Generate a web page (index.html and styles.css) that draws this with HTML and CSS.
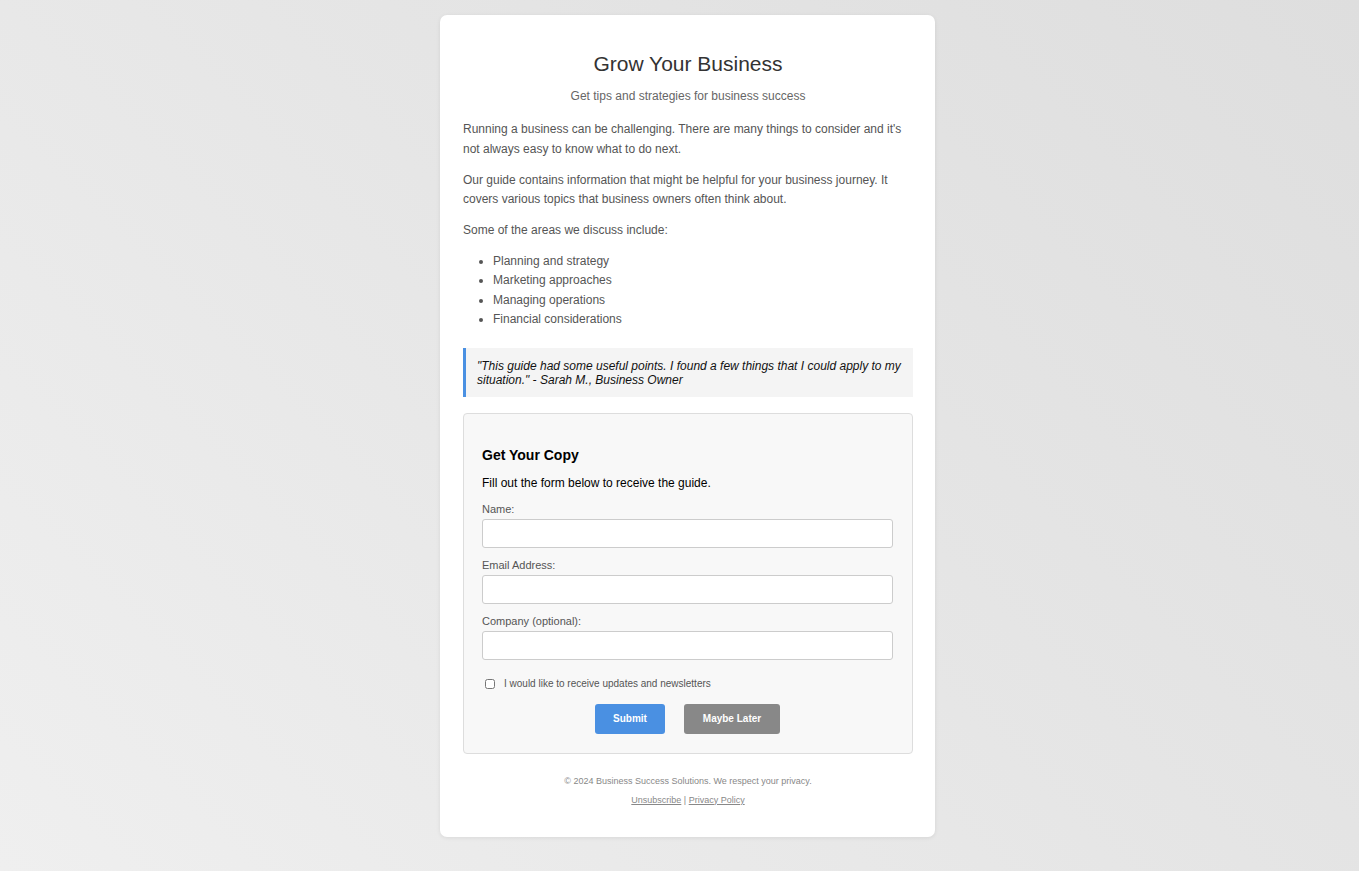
FILE: index.html
```html
<!DOCTYPE html>
<html lang="en">
<head>
<meta charset="utf-8">
<title>Grow Your Business</title>
<link rel="stylesheet" href="styles.css">
</head>
<body>
<div class="card">
  <h1 class="title">Grow Your Business</h1>
  <p class="subtitle">Get tips and strategies for business success</p>

  <p class="body-text">Running a business can be challenging. There are many things to consider and it's not always easy to know what to do next.</p>
  <p class="body-text">Our guide contains information that might be helpful for your business journey. It covers various topics that business owners often think about.</p>
  <p class="body-text">Some of the areas we discuss include:</p>
  <ul class="topics">
    <li>Planning and strategy</li>
    <li>Marketing approaches</li>
    <li>Managing operations</li>
    <li>Financial considerations</li>
  </ul>

  <blockquote class="quote">"This guide had some useful points. I found a few things that I could apply to my situation." - Sarah M., Business Owner</blockquote>

  <form class="form-box">
    <h3 class="form-title">Get Your Copy</h3>
    <p class="form-intro">Fill out the form below to receive the guide.</p>
    <div class="field">
      <label class="field-label" for="name">Name:</label>
      <input class="field-input" type="text" id="name">
    </div>
    <div class="field">
      <label class="field-label" for="email">Email Address:</label>
      <input class="field-input" type="email" id="email">
    </div>
    <div class="field">
      <label class="field-label" for="company">Company (optional):</label>
      <input class="field-input" type="text" id="company">
    </div>
    <div class="check-row">
      <input class="check" type="checkbox" id="news">
      <label class="check-label" for="news">I would like to receive updates and newsletters</label>
    </div>
    <div class="buttons">
      <button type="button" class="btn btn-primary">Submit</button>
      <button type="button" class="btn btn-secondary">Maybe Later</button>
    </div>
  </form>

  <div class="footer">
    <p class="footer-line">© 2024 Business Success Solutions. We respect your privacy.</p>
    <p class="footer-line footer-links"><a href="#">Unsubscribe</a> | <a href="#">Privacy Policy</a></p>
  </div>
</div>
</body>
</html>
```

FILE: styles.css
```css
html, body {
  margin: 0;
  padding: 0;
  min-height: 100%;
}
body {
  font-family: "Liberation Sans", Arial, sans-serif;
  background: linear-gradient(45deg, #efefef 0%, #e6e6e6 50%, #dedede 100%);
  min-height: 871px;
  padding: 15px 0 0 16px;
  box-sizing: border-box;
}
.card {
  width: 495px;
  box-sizing: border-box;
  margin: 0 auto;
  background: #fff;
  border-radius: 7px;
  box-shadow: 0 1px 4px rgba(0,0,0,0.08);
  padding: 37px 22px 31px 23px;
}
.title {
  margin: 0;
  text-align: center;
  font-size: 21px;
  font-weight: normal;
  color: #333;
  line-height: 23px;
}
.subtitle {
  margin: 14px 0 0;
  text-align: center;
  font-size: 12px;
  color: #666;
  line-height: 14px;
}
.body-text {
  margin: 17px 0 0;
  font-size: 12px;
  color: #555;
  line-height: 19.5px;
}
.body-text + .body-text {
  margin-top: 11.5px;
}
.topics {
  margin: 11px 0 0;
  padding-left: 30px;
  font-size: 12px;
  color: #555;
  line-height: 19.5px;
}
.quote {
  margin: 18px 0 0;
  background: #f4f4f4;
  border-left: 3px solid #4a90e2;
  padding: 11px 12px 10px 11px;
  font-size: 12px;
  font-style: italic;
  color: #111;
  line-height: 14px;
}
.form-box {
  margin-top: 16px;
  background: #f8f8f8;
  border: 1px solid #ddd;
  border-radius: 4px;
  padding: 33px 19px 19px 18px;
}
.form-title {
  margin: 0;
  font-size: 14px;
  font-weight: bold;
  color: #000;
  line-height: 16px;
}
.form-intro {
  margin: 13px 0 0;
  font-size: 12px;
  color: #000;
  line-height: 14px;
}
.field {
  margin-top: 13px;
}
.field + .field {
  margin-top: 11px;
}
.field-label {
  display: block;
  font-size: 11px;
  color: #555;
  line-height: 13px;
  margin-bottom: 3px;
}
.field-input {
  display: block;
  width: 100%;
  box-sizing: border-box;
  height: 29px;
  margin: 0;
  border: 1px solid #ccc;
  border-radius: 3px;
  background: #fff;
  font-family: inherit;
  font-size: 12px;
}
.check-row {
  display: flex;
  align-items: center;
  margin-top: 17px;
  height: 14px;
}
.check {
  margin: 0 0 0 3px;
  width: 10px;
  height: 10px;
}
.check-label {
  margin-left: 9px;
  font-size: 10px;
  color: #555;
}
.buttons {
  display: flex;
  justify-content: center;
  gap: 19px;
  margin-top: 13px;
}
.btn {
  height: 30px;
  border: none;
  border-radius: 3px;
  padding: 0 18px;
  font-family: inherit;
  font-size: 10px;
  font-weight: bold;
  color: #fff;
  cursor: pointer;
}
.btn-primary {
  background: #4a90e2;
  width: 70px;
  padding: 0;
}
.btn-secondary {
  background: #888;
  width: 96px;
  padding: 0;
}
.footer {
  margin-top: 22px;
  text-align: center;
}
.footer-line {
  margin: 0;
  font-size: 9px;
  color: #888;
  line-height: 11px;
}
.footer-links {
  margin-top: 8px;
}
.footer-links a {
  color: #888;
}
```
